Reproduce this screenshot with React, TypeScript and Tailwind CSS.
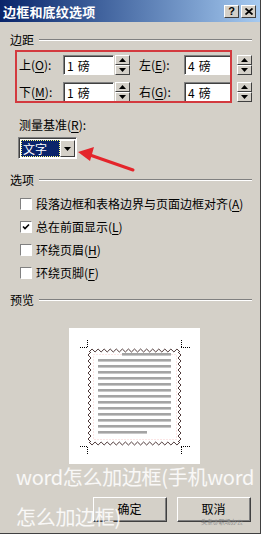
import React from "react";

const F = { fontFamily: '"Noto Sans CJK SC", "Noto Sans", sans-serif' } as React.CSSProperties;

function Header({ label }: { label: string }) {
  return (
    <div className="flex items-center h-[12px] pl-[10px] pr-[8px]">
      <span className="text-[12px] leading-[12px] text-black">{label}</span>
      <div className="flex-1 ml-[5px] border-t border-t-[#808080] border-b border-b-white h-0" />
    </div>
  );
}

function Spin() {
  return (
    <div className="flex flex-col w-[15px] h-[20px] ml-[1px]">
      {["up", "down"].map((d) => (
        <div
          key={d}
          className="flex-1 bg-[#d4d0c8] border-t border-l border-t-white border-l-white border-b border-r border-b-[#404040] border-r-[#404040] flex items-center justify-center"
        >
          <svg width="7" height="4" viewBox="0 0 7 4">
            {d === "up" ? <polygon points="3.5,0 7,4 0,4" fill="#000" /> : <polygon points="0,0 7,0 3.5,4" fill="#000" />}
          </svg>
        </div>
      ))}
    </div>
  );
}

function Input({ w, num }: { w: string; num: string }) {
  return (
    <div className={`${w} h-[20px] bg-white border-t border-l border-t-[#808080] border-l-[#808080] border-b border-r border-b-white border-r-white`}>
      <div className="h-full border-t border-l border-t-[#404040] border-l-[#404040] flex items-center pl-[2px] text-[12px] text-black gap-[4px]">
        <span>{num}</span>
        <span>磅</span>
      </div>
    </div>
  );
}

function Check({ checked, label }: { checked?: boolean; label: React.ReactNode }) {
  return (
    <div className="flex items-center h-[23px] pl-[20px]">
      <div className="w-[12px] h-[12px] bg-white border-t border-l border-t-[#808080] border-l-[#808080] border-b border-r border-b-white border-r-white flex items-center justify-center">
        {checked && (
          <svg width="8" height="8" viewBox="0 0 8 8">
            <path d="M1 3.5 L3 5.5 L7 1.5" stroke="#000" strokeWidth="1.6" fill="none" />
          </svg>
        )}
      </div>
      <span className="ml-[4px] text-[12px] text-black">{label}</span>
    </div>
  );
}

function zig(x1: number, y1: number, x2: number, y2: number, amp: number, per: number) {
  const pts: string[] = [];
  const horiz = y1 === y2;
  const len = horiz ? x2 - x1 : y2 - y1;
  const n = Math.round(len / (per / 2));
  for (let i = 0; i <= n; i++) {
    const t = (i * len) / n;
    const o = i % 2 === 0 ? 0 : amp;
    if (horiz) pts.push(`${x1 + t},${y1 - o}`);
    else pts.push(`${x1 - o},${y1 + t}`);
  }
  return pts.join(" ");
}

function Preview() {
  const lines = Array.from({ length: 14 }, (_, i) => i);
  return (
    <svg width="131" height="136" viewBox="0 0 131 136">
      <rect x="0" y="0" width="131" height="136" fill="#fff" />
      <g stroke="#000" strokeWidth="1" strokeDasharray="1 1" fill="none">
        <path d="M11 19.5 H19 M18.5 12 V19" />
        <path d="M112 19.5 H121 M112.5 12 V19" />
        <path d="M11 118.5 H19 M18.5 119 V126" />
        <path d="M112 118.5 H121 M112.5 119 V126" />
      </g>
      <rect x="24.5" y="26.5" width="83" height="85" fill="none" stroke="#f6caca" strokeWidth="1" strokeDasharray="1 2" />
      <g stroke="#3a2222" strokeWidth="0.9" fill="none">
        <polyline points={zig(20, 24, 111, 24, 3, 6)} />
        <polyline points={zig(20, 114, 111, 114, -3, 6)} />
        <polyline points={zig(22, 24, 22, 114, 3, 6)} />
        <polyline points={zig(109, 24, 109, 114, -3, 6)} />
      </g>
      {lines.map((i) => {
        const y = 25 + i * 6;
        const x1 = i === 0 ? 53 : 29;
        const x2 = i === 13 ? 78 : 102;
        return <rect key={i} x={x1} y={y} width={x2 - x1} height="2.6" fill="#a4a4a4" />;
      })}
    </svg>
  );
}

function Button({ label }: { label: string }) {
  return (
    <div className="w-[74px] h-[25px] bg-[#d4d0c8] border-t border-l border-t-white border-l-white border-b border-r border-b-[#404040] border-r-[#404040] flex items-center justify-center text-[12px] text-black">
      <div className="w-full h-full border-b border-r border-b-[#808080] border-r-[#808080] flex items-center justify-center">
        {label}
      </div>
    </div>
  );
}

function U({ c }: { c: string }) {
  return <span className="underline underline-offset-2">{c}</span>;
}

export default function App() {
  return (
    <div style={F} className="relative w-[261px] h-[534px] bg-[#d4d0c8] overflow-hidden border-r border-b border-r-[#404040] border-b-[#404040]">
      <div className="h-[22px] flex items-center justify-between bg-gradient-to-r from-[#0a246a] to-[#a6caf0] pl-[3px] pr-[4px]">
        <span className="text-white font-bold text-[13px] leading-none tracking-[0.2px]">边框和底纹选项</span>
        <div className="flex gap-[2px]">
          <div className="w-[15px] h-[13px] bg-[#d4d0c8] border-t border-l border-t-white border-l-white border-b border-r border-b-[#404040] border-r-[#404040] flex items-center justify-center text-[11px] font-bold leading-none text-black" style={{ fontFamily: '"Liberation Sans", sans-serif' }}>?</div>
          <div className="w-[15px] h-[13px] bg-[#d4d0c8] border-t border-l border-t-white border-l-white border-b border-r border-b-[#404040] border-r-[#404040] flex items-center justify-center">
            <svg width="8" height="7" viewBox="0 0 8 7"><path d="M0.5 0.5 L7.5 6.5 M7.5 0.5 L0.5 6.5" stroke="#000" strokeWidth="1.8" /></svg>
          </div>
        </div>
      </div>

      <div className="mt-[12px]"><Header label="边距" /></div>

      <div className="mt-[9px] flex flex-col gap-[7px] pl-[19px]">
        {[
          ["上", "O", "左", "E"],
          ["下", "M", "右", "G"],
        ].map(([a, ak, b, bk]) => (
          <div key={a} className="flex items-center h-[20px] text-[12px] text-black">
            <span className="w-[44px]">{a}(<U c={ak} />):</span>
            <Input w="w-[51px]" num="1" />
            <Spin />
            <span className="ml-[9px] w-[45px]">{b}(<U c={bk} />):</span>
            <Input w="w-[48px]" num="4" />
            <div className="ml-[4px]"><Spin /></div>
          </div>
        ))}
      </div>

      <div className="mt-[16px] h-[14px] pl-[19px] flex items-center text-[12px] text-black">测量基准(<U c="R" />):</div>

      <div className="mt-[5px] ml-[18px] w-[59px] h-[22px] bg-white border-t border-l border-t-[#808080] border-l-[#808080] border-b border-r border-b-white border-r-white">
        <div className="h-full border-t border-l border-t-[#404040] border-l-[#404040] flex items-stretch p-[1px]">
          <div className="flex-1 bg-[#0a246a] outline outline-1 outline-dotted outline-[#ffff80] -outline-offset-1 flex items-center pl-[2px] text-white text-[12px]">文字</div>
          <div className="w-[15px] bg-[#d4d0c8] border-t border-l border-t-white border-l-white border-b border-r border-b-[#404040] border-r-[#404040] flex items-center justify-center">
            <svg width="7" height="4" viewBox="0 0 7 4"><polygon points="0,0 7,0 3.5,4" fill="#000" /></svg>
          </div>
        </div>
      </div>

      <div className="mt-[15px]"><Header label="选项" /></div>

      <div className="mt-[6px] flex flex-col">
        <Check label={<>段落边框和表格边界与页面边框对齐(<U c="A" />)</>} />
        <Check checked label={<>总在前面显示(<U c="L" />)</>} />
        <Check label={<>环绕页眉(<U c="H" />)</>} />
        <Check label={<>环绕页脚(<U c="F" />)</>} />
      </div>

      <div className="mt-[10px]"><Header label="预览" /></div>

      <div className="mt-[22px] ml-[69px] w-[131px] h-[136px]">
        <Preview />
      </div>

      <div className="mt-[33px] flex gap-[10px] pl-[93px]">
        <Button label="确定" />
        <Button label="取消" />
      </div>

      <div className="absolute left-[15px] top-[50px] w-[217px] h-[53px] border-2 border-[#d33a3f] pointer-events-none" />
      <svg className="absolute left-[74px] top-[140px]" width="66" height="36" viewBox="0 0 66 36">
        <path d="M59 30 L16 15" stroke="#e4252b" strokeWidth="3" strokeLinecap="round" />
        <polygon points="4,12 20,7 16,21" fill="#e4252b" />
      </svg>

      <div className="absolute left-[16px] top-[465px] text-white/85 text-[20px] leading-[24px] font-normal tracking-[-0.3px] whitespace-nowrap">
        word怎么加边框(手机word
      </div>
      <div className="absolute left-[16px] top-[505px] text-white/85 text-[20px] leading-[24px] font-normal tracking-[-0.3px] whitespace-nowrap">
        怎么加边框)
      </div>
      <div className="absolute left-[201px] top-[518px] text-[6px] leading-[8px] text-[#8a8a8a] whitespace-nowrap">头条@职场办公</div>
    </div>
  );
}
